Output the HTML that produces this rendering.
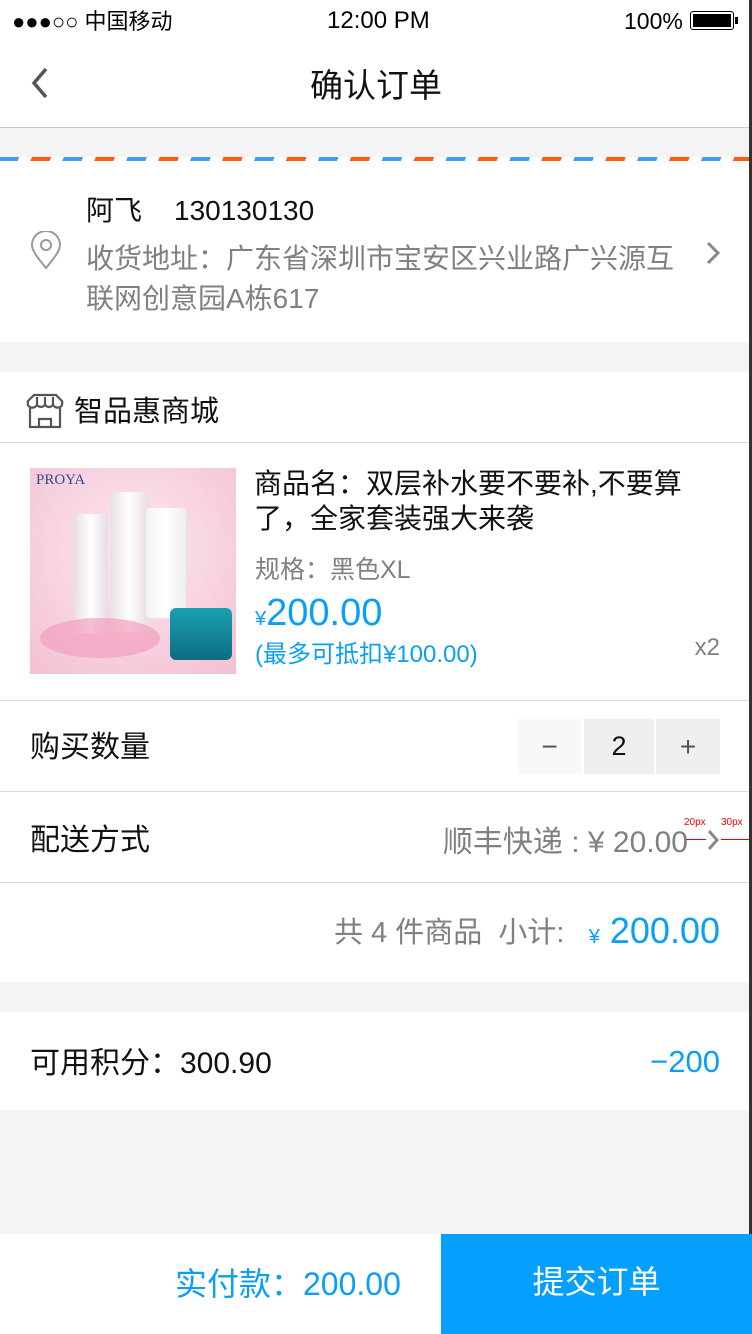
<!DOCTYPE html>
<html><head><meta charset="utf-8"><style>
*{margin:0;padding:0;box-sizing:border-box}
body{width:752px;height:1334px;background:#f4f4f4;position:relative;overflow:hidden;font-family:"Liberation Sans","Noto Sans CJK SC",sans-serif;color:#222}
.a{position:absolute;white-space:nowrap}
.w{position:absolute;left:0;width:752px;background:#fff}
.ln{position:absolute;left:0;width:752px;height:1px;background:#ddd}
.blue{color:#0a9ff5}
.gray{color:#808080}
</style></head><body>
<div class="w" style="top:0;height:127px"></div>
<div class="a" style="left:12px;top:4px;font-size:22px;color:#000">●●●○○ 中国移动</div>
<div class="a" style="left:327px;top:7px;font-size:24px;color:#000">12:00 PM</div>
<div class="a" style="left:624px;top:8px;font-size:23px;color:#000">100%</div>
<div class="a" style="left:690px;top:11px;width:44px;height:19px;border:1.5px solid #000;border-radius:3px;padding:2px"><div style="background:#000;width:100%;height:100%"></div></div>
<div class="a" style="left:735px;top:17px;width:3px;height:7px;background:#000"></div>
<svg class="a" style="left:28px;top:66px" width="22" height="34"><path d="M18 3 L6 17 L18 31" stroke="#555" stroke-width="3.5" fill="none"/></svg>
<div class="a" style="left:0;width:752px;text-align:center;top:59px;font-size:33px;color:#111">确认订单</div>
<div class="ln" style="top:127px;background:#ccc"></div>

<div class="w" style="top:157px;height:185px"></div>
<div class="a" style="left:0;top:157px;width:752px;height:4px;background:repeating-linear-gradient(110deg,#3d9cf5 0 18px,transparent 18px 30px,#ff5a0e 30px 48px,transparent 48px 60px)"></div>
<div class="a" style="left:86px;top:189px;font-size:28px;color:#111">阿飞<span style="display:inline-block;width:32px"></span>130130130</div>
<svg class="a" style="left:29px;top:231px" width="36" height="40"><path d="M17 37 C7 25 3 19 3 14 A14 14 0 0 1 31 14 C31 19 27 25 17 37Z" stroke="#999" stroke-width="2" fill="none"/><circle cx="17" cy="14" r="5" stroke="#999" stroke-width="2" fill="none"/></svg>
<div class="a gray" style="left:86px;top:239px;font-size:28px;line-height:40px;white-space:normal;width:600px">收货地址：广东省深圳市宝安区兴业路广兴源互联网创意园A栋617</div>
<svg class="a" style="left:704px;top:240px" width="18" height="26"><path d="M4 3 L14 13 L4 23" stroke="#888" stroke-width="3" fill="none"/></svg>

<div class="w" style="top:372px;height:738px"></div>
<svg class="a" style="left:26px;top:393px" width="38" height="36"><path d="M4 14 Q1 13 2 8 L8 2 L30 2 L36 8 Q37 13 34 14 M4 14 Q8 16 11 12 Q15 16 19 12 Q23 16 27 12 Q30 16 34 14 M11 12 L11 4 M19 12 L19 4 M27 12 L27 4 M4 15 L4 34 L34 34 L34 15 M13 34 L13 26 L25 26 L25 34" stroke="#555" stroke-width="2.2" fill="none"/></svg>
<div class="a" style="left:74px;top:388px;font-size:29px;color:#111">智品惠商城</div>
<div class="ln" style="top:442px"></div>
<div class="a" style="left:30px;top:468px;width:206px;height:206px;background:radial-gradient(circle at 50% 40%,#fde9f1,#f3bfd3);overflow:hidden">
 <div class="a" style="left:6px;top:4px;font-size:15px;color:#2a4d8f;font-family:'Liberation Serif',serif">PROYA</div>
 <div class="a" style="left:44px;top:46px;width:34px;height:120px;background:linear-gradient(90deg,#e9dde5,#fff,#e6dce3);border-radius:6px"></div>
 <div class="a" style="left:80px;top:24px;width:38px;height:140px;background:linear-gradient(90deg,#eadee6,#fff,#e7dde4);border-radius:6px"></div>
 <div class="a" style="left:116px;top:40px;width:40px;height:110px;background:linear-gradient(90deg,#f2f2f2,#fff,#eee);border-radius:4px"></div>
 <div class="a" style="left:140px;top:140px;width:62px;height:52px;background:linear-gradient(#1aa0b3,#0d6d82);border-radius:6px"></div>
 <div class="a" style="left:10px;top:150px;width:120px;height:40px;background:#f29fbf;border-radius:50%;opacity:.7"></div>
</div>
<div class="a" style="left:254px;top:466px;font-size:28px;line-height:35px;white-space:normal;width:470px;color:#111">商品名：双层补水要不要补,不要算了，全家套装强大来袭</div>
<div class="a gray" style="left:255px;top:550px;font-size:25px">规格：黑色XL</div>
<div class="a blue" style="left:255px;top:591px;font-size:38px;line-height:44px"><span style="font-size:20px">¥</span>200.00</div>
<div class="a blue" style="left:255px;top:634px;font-size:24px">(最多可抵扣¥100.00)</div>
<div class="a gray" style="right:32px;top:634px;font-size:24px">x2</div>
<div class="ln" style="top:700px"></div>
<div class="a" style="left:30px;top:722px;font-size:30px;color:#111">购买数量</div>
<div class="a" style="left:518px;top:719px;width:63px;height:55px;background:#f8f8f8;text-align:center;font-size:28px;line-height:55px;color:#555">−</div>
<div class="a" style="left:584px;top:719px;width:70px;height:55px;background:#efefef;text-align:center;font-size:27px;line-height:55px;color:#111">2</div>
<div class="a" style="left:656px;top:719px;width:64px;height:55px;background:#efefef;text-align:center;font-size:28px;line-height:55px;color:#555">+</div>
<div class="ln" style="top:791px"></div>
<div class="a" style="left:30px;top:815px;font-size:30px;color:#111">配送方式</div>
<div class="a gray" style="right:64px;top:817px;font-size:30px">顺丰快递 : ¥ 20.00</div>
<svg class="a" style="left:706px;top:829px" width="14" height="22"><path d="M3 2 L11 11 L3 20" stroke="#888" stroke-width="3" fill="none"/></svg>
<div class="a" style="left:684px;top:817px;font-size:10px;color:#e00">20px</div>
<div class="a" style="left:721px;top:817px;font-size:10px;color:#e00">30px</div>
<div class="a" style="left:686px;top:839px;width:20px;height:1px;background:#e00"></div>
<div class="a" style="left:721px;top:839px;width:30px;height:1px;background:#e00"></div>
<div class="ln" style="top:882px"></div>
<div class="a gray" style="left:334px;top:909px;font-size:29px">共 4 件商品&nbsp;&nbsp;小计:</div>
<div class="a blue" style="right:32px;top:910px;font-size:36px"><span style="font-size:20px">¥</span> 200.00</div>
<div class="a" style="left:0;top:982px;width:752px;height:30px;background:#f4f4f4"></div>
<div class="a" style="left:30px;top:1038px;font-size:30px;color:#111">可用积分：300.90</div>
<div class="a blue" style="right:32px;top:1044px;font-size:31px">−200</div>

<div class="w" style="top:1234px;height:100px"></div>
<div class="a blue" style="left:175px;top:1259px;font-size:32px">实付款：200.00</div>
<div class="a" style="left:441px;top:1234px;width:311px;height:100px;background:#05a0fe;color:#fff;font-size:32px;text-align:center;line-height:96px">提交订单</div>
<div class="a" style="left:749px;top:0;width:3px;height:1234px;background:#333"></div>
</body></html>
